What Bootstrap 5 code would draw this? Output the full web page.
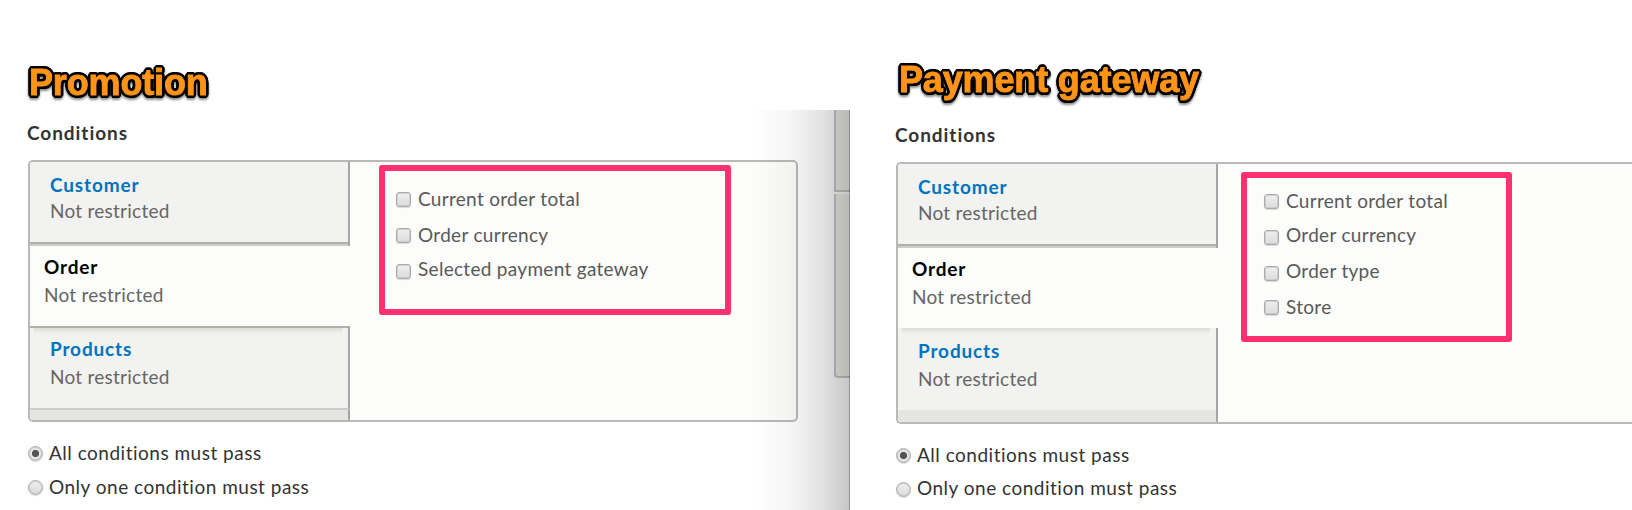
<!DOCTYPE html>
<html lang="en">
<head>
<meta charset="utf-8">
<meta name="viewport" content="width=device-width, initial-scale=1">
<title>Conditions</title>
<link href="https://cdn.jsdelivr.net/npm/bootstrap@5.3.0/dist/css/bootstrap.min.css" rel="stylesheet">
<style>
  body { font-family: Lato, "Liberation Sans", sans-serif; font-size: 19px; letter-spacing: .5px; color: #333; height: 510px; background: #fff; }
  .side-promo { width: 850px; padding-left: 28px; height: 510px; }
  .side-gateway { padding: 2px 0 0 46px; min-width: 0; height: 510px; }
  .caption-tag { font: bold 36px/44px "Liberation Sans", sans-serif; letter-spacing: -.15px; color: #ff9418; -webkit-text-stroke: .9px #ff9418;
    text-shadow: 3px 0 #000, 2.8px 1.2px #000, 2.1px 2.1px #000, 1.2px 2.8px #000, 0 3px #000, -1.2px 2.8px #000, -2.1px 2.1px #000, -2.8px 1.2px #000, -3px 0 #000, -2.8px -1.2px #000, -2.1px -2.1px #000, -1.2px -2.8px #000, 0 -3px #000, 1.2px -2.8px #000, 2.1px -2.1px #000, 2.8px -1.2px #000;
    filter: drop-shadow(0 2px 1px rgba(0,0,0,.45)); padding: 61px 0 0 1px; height: 119px; white-space: nowrap; }
  .side-gateway .caption-tag { padding: 56px 0 0 3px; }
  .group-title { font-size: 19px; font-weight: 700; line-height: 28px; height: 41px; letter-spacing: .95px; margin-left: -1px; }
  .tabs-frame { width: 770px; height: 262px; border: 2px solid #b9b9b7; border-radius: 5px; background: #fcfcfa; overflow: hidden; }
  .side-gateway .tabs-frame { width: auto; border-right: 0; border-radius: 5px 0 0 5px; }
  .tab-col { width: 320px; background: #e5e5e1; }
  .tab-item { height: 84px; padding: 10px 0 0 20px; line-height: 26px; letter-spacing: .25px; background: #f2f2f0; border-right: 2px solid #a6a6a6; color: #666; }
  .tab-item strong { display: block; color: #0074bd; letter-spacing: .85px; }
  .tab-first { box-shadow: inset 0 -2px #ccc, inset 0 -4px #b1b1a9; }
  .tab-active { height: 80px; padding: 7px 0 0 14px; line-height: 28px; background: #fcfcfa; border-right: 0; }
  .tab-active strong { color: #000; }
  .tab-last { height: 84px; padding-top: 9px; line-height: 28px; border-bottom: 2px solid #ccc; box-shadow: inset 0 2px #b1b1a9; background: linear-gradient(#dcdcda, #f2f2f0 6px) 4px 2px / 308px 6px no-repeat #f2f2f0; }
  .side-gateway .tab-last { height: 82px; border-bottom: 0; box-shadow: none; background-position: 4px 0; }
  .tab-rest { flex: 1; border-right: 2px solid #a6a6a6; }
  .marked { border: 6px solid #ff3070; border-radius: 3px; color: #595959; letter-spacing: .3px; }
  .side-promo .marked { width: 352px; height: 150px; margin: 3px 0 0 29px; padding: 10px 0 0 11px; }
  .side-gateway .marked { width: 271px; height: 170px; margin: 8px 0 0 23px; padding: 5px 0 0 17px; }
  .opt-row { height: 36px; line-height: 36px; gap: 7px; }
  .opt-row.tight { height: 34px; }
  .raise { margin-top: -2px; }
  .tick, .dot { width: 15px; height: 15px; flex: none; appearance: none; margin: 11px 0 0; border: 1px solid #aaa; border-radius: 3px; background: linear-gradient(#eee, #dcdcdc); box-shadow: inset 0 0 0 1px #c0c0c099, 0 1px 1px #0002; }
  .dot { border-radius: 50%; margin: 0; }
  .dot:checked { background: radial-gradient(circle, #555 3.2px, #e6e6e6 4px); }
  .pass-row { height: 34px; line-height: 34px; gap: 6px; }
  .pass-list { padding-top: 14px; }
  .scroll-edge { top: 110px; left: 750px; width: 100px; height: 400px; }
  .scroll-edge .shade { top: 0; left: 0; width: 100px; height: 400px; background: linear-gradient(90deg, #0000, #00000009 40%, #0000001c 70%, #00000038 99%, #0000006b 99%); }
  .thumb { width: 16px; background: #eeefe8; border: 2px solid #c6c7c3; border-right: 0; }
  .thumb-a { height: 82px; border-top: 0; }
  .thumb-b { height: 184px; margin-top: 2px; border-top: 0; border-bottom-left-radius: 4px; }
</style>
</head>
<body class="d-flex overflow-hidden position-relative">
<section class="side-promo flex-shrink-0">
  <div class="caption-tag">Promotion</div>
  <h2 class="group-title mb-0">Conditions</h2>
  <div class="tabs-frame d-flex">
    <div class="tab-col d-flex flex-column flex-shrink-0">
      <div class="tab-item tab-first"><strong>Customer</strong>Not restricted</div>
      <div class="tab-item tab-active"><strong>Order</strong>Not restricted</div>
      <div class="tab-item tab-last"><strong>Products</strong>Not restricted</div>
      <div class="tab-rest"></div>
    </div>
    <div class="marked flex-shrink-0">
      <label class="opt-row d-flex"><input type="checkbox" class="tick"><span>Current order total</span></label>
      <label class="opt-row d-flex"><input type="checkbox" class="tick"><span>Order currency</span></label>
      <label class="opt-row d-flex"><input type="checkbox" class="tick"><span class="raise">Selected payment gateway</span></label>
    </div>
  </div>
  <div class="pass-list">
    <label class="pass-row d-flex align-items-center"><input type="radio" name="a" class="dot" checked><span>All conditions must pass</span></label>
    <label class="pass-row d-flex align-items-center"><input type="radio" name="a" class="dot"><span>Only one condition must pass</span></label>
  </div>
</section>
<section class="side-gateway flex-grow-1">
  <div class="caption-tag">Payment gateway</div>
  <h2 class="group-title mb-0">Conditions</h2>
  <div class="tabs-frame d-flex">
    <div class="tab-col d-flex flex-column flex-shrink-0">
      <div class="tab-item tab-first"><strong>Customer</strong>Not restricted</div>
      <div class="tab-item tab-active"><strong>Order</strong>Not restricted</div>
      <div class="tab-item tab-last"><strong>Products</strong>Not restricted</div>
      <div class="tab-rest"></div>
    </div>
    <div class="marked flex-shrink-0">
      <label class="opt-row d-flex"><input type="checkbox" class="tick"><span>Current order total</span></label>
      <label class="opt-row d-flex"><input type="checkbox" class="tick"><span class="raise">Order currency</span></label>
      <label class="opt-row tight d-flex"><input type="checkbox" class="tick"><span class="raise">Order type</span></label>
      <label class="opt-row d-flex"><input type="checkbox" class="tick"><span>Store</span></label>
    </div>
  </div>
  <div class="pass-list">
    <label class="pass-row d-flex align-items-center"><input type="radio" name="b" class="dot" checked><span>All conditions must pass</span></label>
    <label class="pass-row d-flex align-items-center"><input type="radio" name="b" class="dot"><span class="raise">Only one condition must pass</span></label>
  </div>
</section>
<div class="scroll-edge position-absolute d-flex flex-column align-items-end pe-none">
  <div class="thumb thumb-a"></div>
  <div class="thumb thumb-b"></div>
  <div class="shade position-absolute"></div>
</div>
<script src="https://cdn.jsdelivr.net/npm/bootstrap@5.3.0/dist/js/bootstrap.bundle.min.js"></script>
</body>
</html>
